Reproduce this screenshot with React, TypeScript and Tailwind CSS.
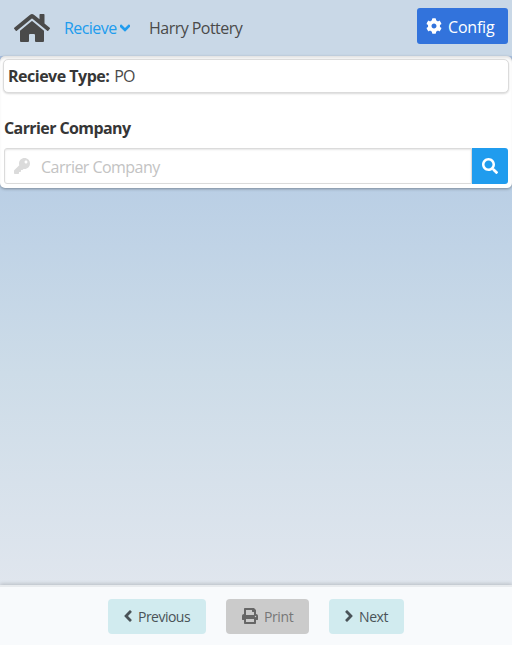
import React from 'react';
import { FaHome, FaAngleDown, FaAngleLeft, FaAngleRight, FaCog, FaKey, FaSearch, FaPrint } from 'react-icons/fa';

function Header() {
  return (
    <header className="flex h-14 shrink-0 items-center bg-[#c9d8e7] pl-3.5 pr-1 text-[#4a4a4a]">
      <FaHome className="h-8 w-9 shrink-0" />
      <a className="ml-3.5 flex w-[67px] items-center whitespace-nowrap text-[#209cee]">
        <span className="w-[53px] tracking-[-0.55px]">Recieve</span>
        <FaAngleDown className="ml-[3px] h-4 w-2.5 shrink-0" viewBox="14 80 292 352" />
      </a>
      <span className="ml-[18px] whitespace-nowrap tracking-[-0.53px]">Harry Pottery</span>
      <button className="mb-1 ml-auto flex h-9 w-[91px] items-center rounded-[3px] bg-[#3273dc] pl-[9px] text-white">
        <FaCog className="size-4 shrink-0" />
        <span className="ml-1.5 whitespace-nowrap pt-px tracking-[-0.2px]">Config</span>
      </button>
    </header>
  );
}

function CarrierForm() {
  return (
    <section className="h-[132px] rounded-[5px] bg-white px-1 pt-[3px] text-[#363636] shadow-[0_1px_3px_rgba(10,10,10,0.35),inset_0_3px_3px_-1px_rgba(10,10,10,0.12)]">
      <div className="-mx-px flex h-[34px] items-center rounded-[5px] border border-[#dbdbdb] bg-white px-1 shadow-[0_1px_2px_rgba(10,10,10,0.15)]">
        <strong className="whitespace-nowrap font-bold tracking-[-0.5px]">Recieve Type:</strong>
        <span className="ml-[5px] tracking-[-0.8px] text-[#4a4a4a]">PO</span>
      </div>
      <label className="mt-[23px] block h-6 whitespace-nowrap font-bold leading-6 tracking-[-0.59px]">Carrier Company</label>
      <div className="mt-2 flex h-9">
        <div className="flex flex-1 items-center rounded-l-[3px] border border-[#dbdbdb] pl-[9px] text-[#c3c3c3] shadow-[inset_0_1px_2px_rgba(10,10,10,0.1)]">
          <FaKey className="size-4 text-[#dbdbdb]" />
          <span className="ml-[11px] whitespace-nowrap pt-0.5 tracking-[-0.54px]">Carrier Company</span>
        </div>
        <button className="flex w-9 items-center justify-center rounded-r-[3px] bg-[#209cee] text-white">
          <FaSearch className="size-4" />
        </button>
      </div>
    </section>
  );
}

function Footer() {
  return (
    <footer className="flex h-[60px] shrink-0 justify-center gap-5 border-t-2 border-[#e8ebee] bg-[#f8fafc] pt-3 text-sm text-[#4a5358] shadow-[0_-1px_4px_rgba(10,10,10,0.2)]">
      <button className="flex h-[35px] w-[98px] items-center rounded bg-[#d1ebef] pl-4">
        <FaAngleLeft className="mb-0.5 h-3.5 w-2 shrink-0" viewBox="16 80 224 352" />
        <span className="ml-1.5 whitespace-nowrap pt-px tracking-[-0.52px]">Previous</span>
      </button>
      <button className="flex h-[35px] w-[83px] items-center rounded bg-[#cbcbcb] pl-4 text-[#777]">
        <FaPrint className="mb-0.5 size-4 shrink-0 text-[#666]" />
        <span className="ml-1.5 whitespace-nowrap pt-px tracking-[-0.4px]">Print</span>
      </button>
      <button className="flex h-[35px] w-[75px] items-center rounded bg-[#d1ebef] pl-4">
        <FaAngleRight className="mb-0.5 h-3.5 w-2 shrink-0" viewBox="16 80 224 352" />
        <span className="ml-1.5 whitespace-nowrap pt-px tracking-[-0.4px]">Next</span>
      </button>
    </footer>
  );
}

export default function App() {
  return (
    <div className="flex h-[645px] w-[512px] flex-col overflow-hidden bg-[#b6cae3] font-['Open_Sans','Noto_Sans',sans-serif] text-base">
      <Header />
      <main className="flex-1 bg-[linear-gradient(to_bottom,#a9c0e0_0%,#bacfe5_25%,#cddce8_60%,#e0e6ee_100%)]">
        <CarrierForm />
      </main>
      <Footer />
    </div>
  );
}
